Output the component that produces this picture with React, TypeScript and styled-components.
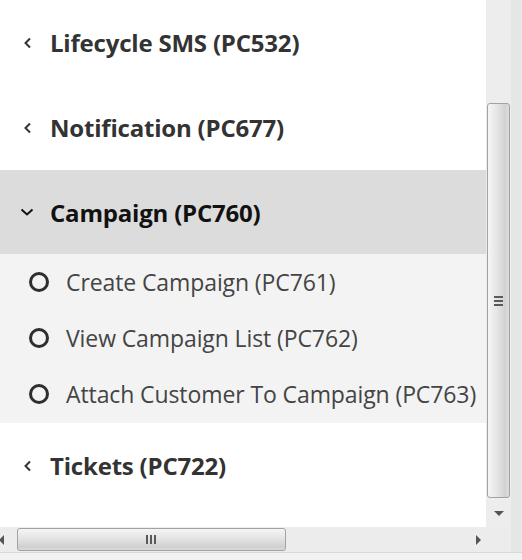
import React from 'react';
import styled, { createGlobalStyle } from 'styled-components';

const GlobalStyle = createGlobalStyle`
  html, body {
    margin: 0;
    padding: 0;
    background: #fff;
  }
  body {
    font-family: "Open Sans", "Noto Sans", sans-serif;
  }
`;

// whole captured window
const Frame = styled.div`
  width: 522px;
  height: 560px;
  display: flex;
  flex-direction: column;
  background: #ececec;
  overflow: hidden;
`;

const MainRow = styled.div`
  display: flex;
  height: 527px;
`;

const Content = styled.div`
  width: 486px;
  background: #fff;
  overflow: hidden;
  display: flex;
  flex-direction: column;
`;

const MenuHeader = styled.div<{ open?: boolean }>`
  height: ${p => (p.open ? 84 : 85)}px;
  display: flex;
  align-items: center;
  padding-left: ${p => (p.open ? 20 : 23)}px;
  background: ${p => (p.open ? '#dcdcdc' : '#fff')};
  color: ${p => (p.open ? '#111' : '#333')};
  font-size: 24px;
  font-weight: 700;
  letter-spacing: -0.2px;
  white-space: nowrap;
`;

const Chevron = styled.span<{ open?: boolean }>`
  width: ${p => (p.open ? 30 : 27)}px;
  display: flex;
  align-items: center;
`;

const SubList = styled.div`
  background: #f3f3f3;
  padding-bottom: 1px;
`;

const SubItem = styled.div`
  height: 56px;
  display: flex;
  align-items: center;
  padding-left: 29px;
  color: #444;
  font-size: 23px;
  letter-spacing: -0.1px;
  white-space: nowrap;
`;

const Dot = styled.span`
  width: 20px;
  height: 20px;
  box-sizing: border-box;
  border: 3px solid #2e2e2e;
  border-radius: 50%;
  margin-right: 17px;
`;

const VScroll = styled.div`
  width: 25px;
  background: #ededed;
  display: flex;
  flex-direction: column;
  align-items: center;
  padding-top: 103px;
`;

const VThumb = styled.div`
  width: 23px;
  height: 395px;
  box-sizing: border-box;
  border: 1px solid #a2a2a2;
  border-radius: 3px;
  background: linear-gradient(to right, #f6f6f6, #e4e4e4 45%, #d2d2d2 80%, #dcdcdc);
  display: flex;
  align-items: center;
  justify-content: center;
`;

const VGrip = styled.div`
  display: flex;
  flex-direction: column;
  gap: 2px;
  span {
    width: 9px;
    height: 2px;
    background: #5a5a5a;
  }
`;

const Arrow = styled.div<{ dir: 'down' | 'right' | 'left' }>`
  width: 0;
  height: 0;
  ${p =>
    p.dir === 'down'
      ? 'border-left: 5px solid transparent; border-right: 5px solid transparent; border-top: 5px solid #555;'
      : p.dir === 'right'
      ? 'border-top: 5px solid transparent; border-bottom: 5px solid transparent; border-left: 5px solid #555;'
      : 'border-top: 5px solid transparent; border-bottom: 5px solid transparent; border-right: 5px solid #555;'}
`;

const DownArrowBox = styled.div`
  margin-top: 13px;
`;

const EdgeStrip = styled.div`
  width: 11px;
  background: #e6e6e6;
`;

const HRow = styled.div`
  display: flex;
  height: 25px;
`;

const HScroll = styled.div`
  width: 486px;
  background: #ececec;
  display: flex;
  align-items: center;
  padding: 0 5px 0 0;
  box-sizing: border-box;
`;

const HThumb = styled.div`
  margin-left: 13px;
  width: 269px;
  height: 23px;
  box-sizing: border-box;
  border: 1px solid #a2a2a2;
  border-radius: 3px;
  background: linear-gradient(to bottom, #f4f4f4, #e4e4e4 45%, #d0d0d0 85%, #dadada);
  display: flex;
  align-items: center;
  padding-left: 128px;
`;

const HGrip = styled.div`
  display: flex;
  gap: 2px;
  span {
    width: 2px;
    height: 9px;
    background: #5a5a5a;
  }
`;

const Spacer = styled.div`
  flex: 1;
`;

const Corner = styled.div`
  width: 25px;
  background: #ececec;
`;

const BottomStrip = styled.div`
  flex: 1;
  background: #f2f2f2;
  border-top: 1px solid #d8d8d8;
`;

const LeftChevron = () => (
  <svg width="10" height="12" viewBox="0 0 10 12">
    <path d="M7 1.5 L2.5 6 L7 10.5" fill="none" stroke="#333" strokeWidth="2" />
  </svg>
);

const DownChevron = () => (
  <svg width="14" height="8" viewBox="0 0 14 8">
    <path d="M1.5 1.5 L7 6.5 L12.5 1.5" fill="none" stroke="#111" strokeWidth="2" />
  </svg>
);

const subItems = [
  'Create Campaign (PC761)',
  'View Campaign List (PC762)',
  'Attach Customer To Campaign (PC763)',
];

const App: React.FC = () => {
  return (
    <Frame>
      <GlobalStyle />
      <MainRow>
        <Content>
          <MenuHeader>
            <Chevron><LeftChevron /></Chevron>
            Lifecycle SMS (PC532)
          </MenuHeader>
          <MenuHeader>
            <Chevron><LeftChevron /></Chevron>
            Notification (PC677)
          </MenuHeader>
          <MenuHeader open>
            <Chevron open><DownChevron /></Chevron>
            Campaign (PC760)
          </MenuHeader>
          <SubList>
            {subItems.map(item => (
              <SubItem key={item}>
                <Dot />
                {item}
              </SubItem>
            ))}
          </SubList>
          <MenuHeader>
            <Chevron><LeftChevron /></Chevron>
            Tickets (PC722)
          </MenuHeader>
        </Content>
        <VScroll>
          <VThumb>
            <VGrip><span /><span /><span /></VGrip>
          </VThumb>
          <DownArrowBox><Arrow dir="down" /></DownArrowBox>
        </VScroll>
        <EdgeStrip />
      </MainRow>
      <HRow>
        <HScroll>
          <Arrow dir="left" style={{ marginLeft: -1 }} />
          <HThumb>
            <HGrip><span /><span /><span /></HGrip>
          </HThumb>
          <Spacer />
          <Arrow dir="right" />
        </HScroll>
        <Corner />
        <EdgeStrip />
      </HRow>
      <BottomStrip />
    </Frame>
  );
};

export default App;
